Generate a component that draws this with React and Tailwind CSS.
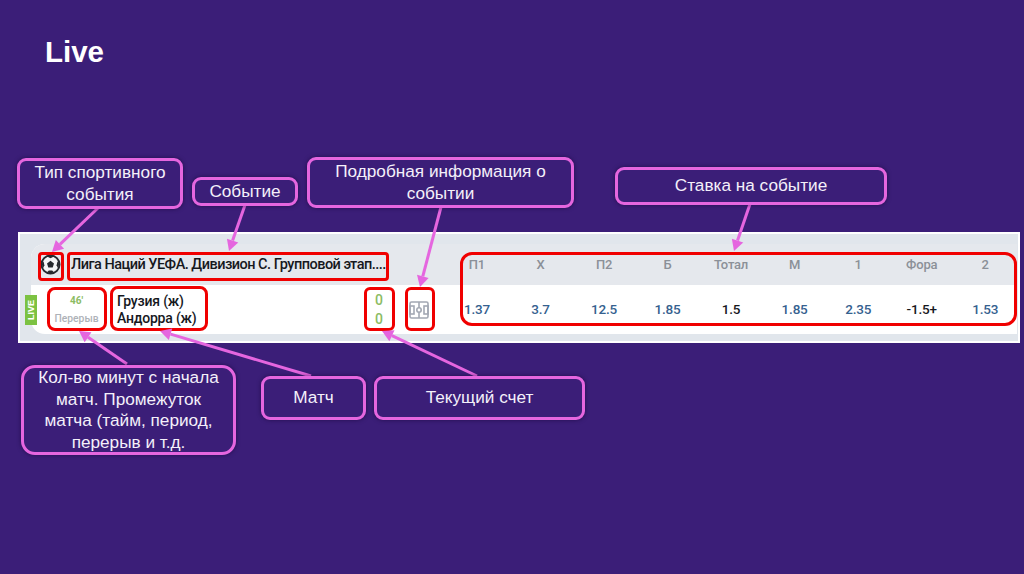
import React from 'react';

const odds = [
  { label: 'П1', value: '1.37' },
  { label: 'Х', value: '3.7' },
  { label: 'П2', value: '12.5' },
  { label: 'Б', value: '1.85' },
  { label: 'Тотал', value: '1.5', plain: true },
  { label: 'М', value: '1.85' },
  { label: '1', value: '2.35' },
  { label: 'Фора', value: '-1.5+', plain: true },
  { label: '2', value: '1.53' },
];

const arrows = [
  { from: [98, 208], to: [52, 252] },
  { from: [245, 205], to: [229, 251] },
  { from: [441, 207], to: [420, 287] },
  { from: [750, 204], to: [734, 251] },
  { from: [127, 364], to: [79, 331] },
  { from: [311, 376], to: [160, 331] },
  { from: [477, 376], to: [382, 331] },
];

function Arrow({ from, to }) {
  const angle = Math.atan2(to[1] - from[1], to[0] - from[0]);
  const back = [to[0] - 11 * Math.cos(angle), to[1] - 11 * Math.sin(angle)];
  const side = [-Math.sin(angle) * 6, Math.cos(angle) * 6];
  const head = [
    to,
    [back[0] + side[0], back[1] + side[1]],
    [back[0] - side[0], back[1] - side[1]],
  ];
  return (
    <g>
      <line x1={from[0]} y1={from[1]} x2={back[0]} y2={back[1]} stroke="#e566df" strokeWidth="3" />
      <polygon points={head.map((p) => p.join(',')).join(' ')} fill="#e566df" />
    </g>
  );
}

function SoccerIcon() {
  return (
    <svg width="21" height="21" viewBox="0 0 21 21">
      <circle cx="10.5" cy="10.5" r="9" fill="#f4f5f7" stroke="#25282e" strokeWidth="2" />
      <polygon points="10.5,6.8 14,9.4 12.7,13.4 8.3,13.4 7,9.4" fill="#25282e" />
      <path d="M7 2.6 L10.5 4.2 L14 2.6 L12.5 1.5 L8.5 1.5 Z" fill="#25282e" />
      <path d="M1.8 10 L3.6 7.4 L4.4 11.2 L3.2 14 Z" fill="#25282e" />
      <path d="M19.2 10 L17.4 7.4 L16.6 11.2 L17.8 14 Z" fill="#25282e" />
      <path d="M7 18.2 L8.8 16.4 L12.2 16.4 L14 18.2 L10.5 19.4 Z" fill="#25282e" />
    </svg>
  );
}

function FieldIcon() {
  return (
    <svg width="20" height="18" viewBox="0 0 20 18" fill="none" stroke="#a3a8b3" strokeWidth="1.6">
      <rect x="1" y="1" width="18" height="16" rx="1.5" />
      <line x1="10" y1="1" x2="10" y2="17" />
      <circle cx="10" cy="9" r="2.2" fill="#ffffff" />
      <rect x="1" y="5" width="4" height="8" />
      <rect x="15" y="5" width="4" height="8" />
    </svg>
  );
}

function Callout({ className, children }) {
  return (
    <div
      className={`absolute flex items-center justify-center rounded-[9px] border-[3px] border-[#e566df] bg-[#3b1e78] text-center text-[17.2px] leading-[21.5px] text-[#f4f0fa] shadow-[0_0_4px_rgba(20,5,50,0.6)] ${className}`}
    >
      <span>{children}</span>
    </div>
  );
}

function Mark({ className }) {
  return <div className={`absolute border-[3px] border-[#f00000] ${className}`} />;
}

export default function App() {
  return (
    <div className="relative h-[574px] w-[1024px] overflow-hidden bg-[#3b1e78] font-['Liberation_Sans',Arial,sans-serif]">
      <h1 className="pl-[45px] pt-[35px] text-[29.5px] font-bold leading-[33px] text-white">Live</h1>

      {/* матч */}
      <div className="ml-[18px] mt-[164px] h-[111px] w-[1002px] border-2 border-white bg-[#e1e6ec] pl-[11px] pr-[1px] pt-[10px] font-['Roboto',sans-serif]">
        <div className="overflow-hidden rounded-l-[14px] bg-white">
          <div className="flex h-[41px] items-center bg-[#e5e8ed]">
            <div className="flex w-[415px] items-center pl-[9px]">
              <SoccerIcon />
              <span className="ml-[10px] whitespace-nowrap text-[14.5px] font-medium tracking-[-0.52px] text-[#16181d]">
                Лига Наций УЕФА. Дивизион С. Групповой этап....
              </span>
            </div>
            <div className="grid w-[573px] grid-cols-9">
              {odds.map((o) => (
                <span key={o.label} className="text-center text-[13px] font-medium tracking-[-0.2px] text-[#8b9098]">
                  {o.label}
                </span>
              ))}
            </div>
          </div>
          <div className="flex h-[49px] items-center">
            <div className="flex w-[415px] items-center">
              <div className="ml-[16px] w-[59px] text-center">
                <div className="text-[10px] font-bold leading-[14px] text-[#8cbc63]">46'</div>
                <div className="mt-[4px] text-[10.3px] font-medium leading-[14px] text-[#aeb2b8]">Перерыв</div>
              </div>
              <div className="ml-[11px] w-[254px] text-[14px] font-medium leading-[17px] tracking-[-0.2px] text-[#16181d]">
                <div>Грузия (ж)</div>
                <div>Андорра (ж)</div>
              </div>
              <div className="w-[16px] text-center text-[14px] font-medium leading-[19px] text-[#8cbc63]">
                <div>0</div>
                <div>0</div>
              </div>
              <div className="ml-[22px]">
                <FieldIcon />
              </div>
            </div>
            <div className="grid w-[573px] grid-cols-9">
              {odds.map((o) => (
                <span
                  key={o.label}
                  className={`text-center text-[13.5px] font-medium tracking-[-0.2px] ${o.plain ? 'text-[#16181d]' : 'text-[#35618f]'}`}
                >
                  {o.value}
                </span>
              ))}
            </div>
          </div>
        </div>
      </div>

      {/* LIVE */}
      <div className="absolute left-[25px] top-[295px] flex h-[30px] w-[12px] items-center justify-center bg-[#7cc242]">
        <span className="rotate-180 text-[9px] font-bold leading-none text-white [writing-mode:vertical-rl]">LIVE</span>
      </div>

      {/* выделения */}
      <Mark className="left-[38px] top-[252px] h-[29px] w-[26px] rounded-[4px]" />
      <Mark className="left-[67px] top-[252px] h-[29px] w-[322px] rounded-[4px]" />
      <Mark className="left-[47px] top-[287px] h-[44px] w-[60px] rounded-[8px]" />
      <Mark className="left-[110px] top-[286px] h-[45px] w-[98px] rounded-[8px]" />
      <Mark className="left-[364px] top-[287px] h-[44px] w-[31px] rounded-[6px]" />
      <Mark className="left-[405px] top-[287px] h-[44px] w-[30px] rounded-[6px]" />
      <Mark className="left-[460px] top-[252px] h-[74px] w-[557px] rounded-[12px]" />

      <svg className="absolute left-0 top-0" width="1024" height="574">
        {arrows.map((a, i) => (
          <Arrow key={i} from={a.from} to={a.to} />
        ))}
      </svg>

      {/* подписи */}
      <Callout className="left-[17px] top-[158px] h-[51px] w-[166px]">Тип спортивного<br />события</Callout>
      <Callout className="left-[192px] top-[177px] h-[29px] w-[106px]">Событие</Callout>
      <Callout className="left-[307px] top-[157px] h-[51px] w-[267px]">Подробная информация о<br />событии</Callout>
      <Callout className="left-[615px] top-[167px] h-[38px] w-[272px]">Ставка на событие</Callout>
      <Callout className="left-[21px] top-[365px] h-[90px] w-[215px] rounded-[14px]">
        Кол-во минут с начала<br />матч. Промежуток<br />матча (тайм, период,<br />перерыв и т.д.
      </Callout>
      <Callout className="left-[261px] top-[376px] h-[44px] w-[105px]">Матч</Callout>
      <Callout className="left-[374px] top-[376px] h-[44px] w-[211px]">Текущий счет</Callout>
    </div>
  );
}
